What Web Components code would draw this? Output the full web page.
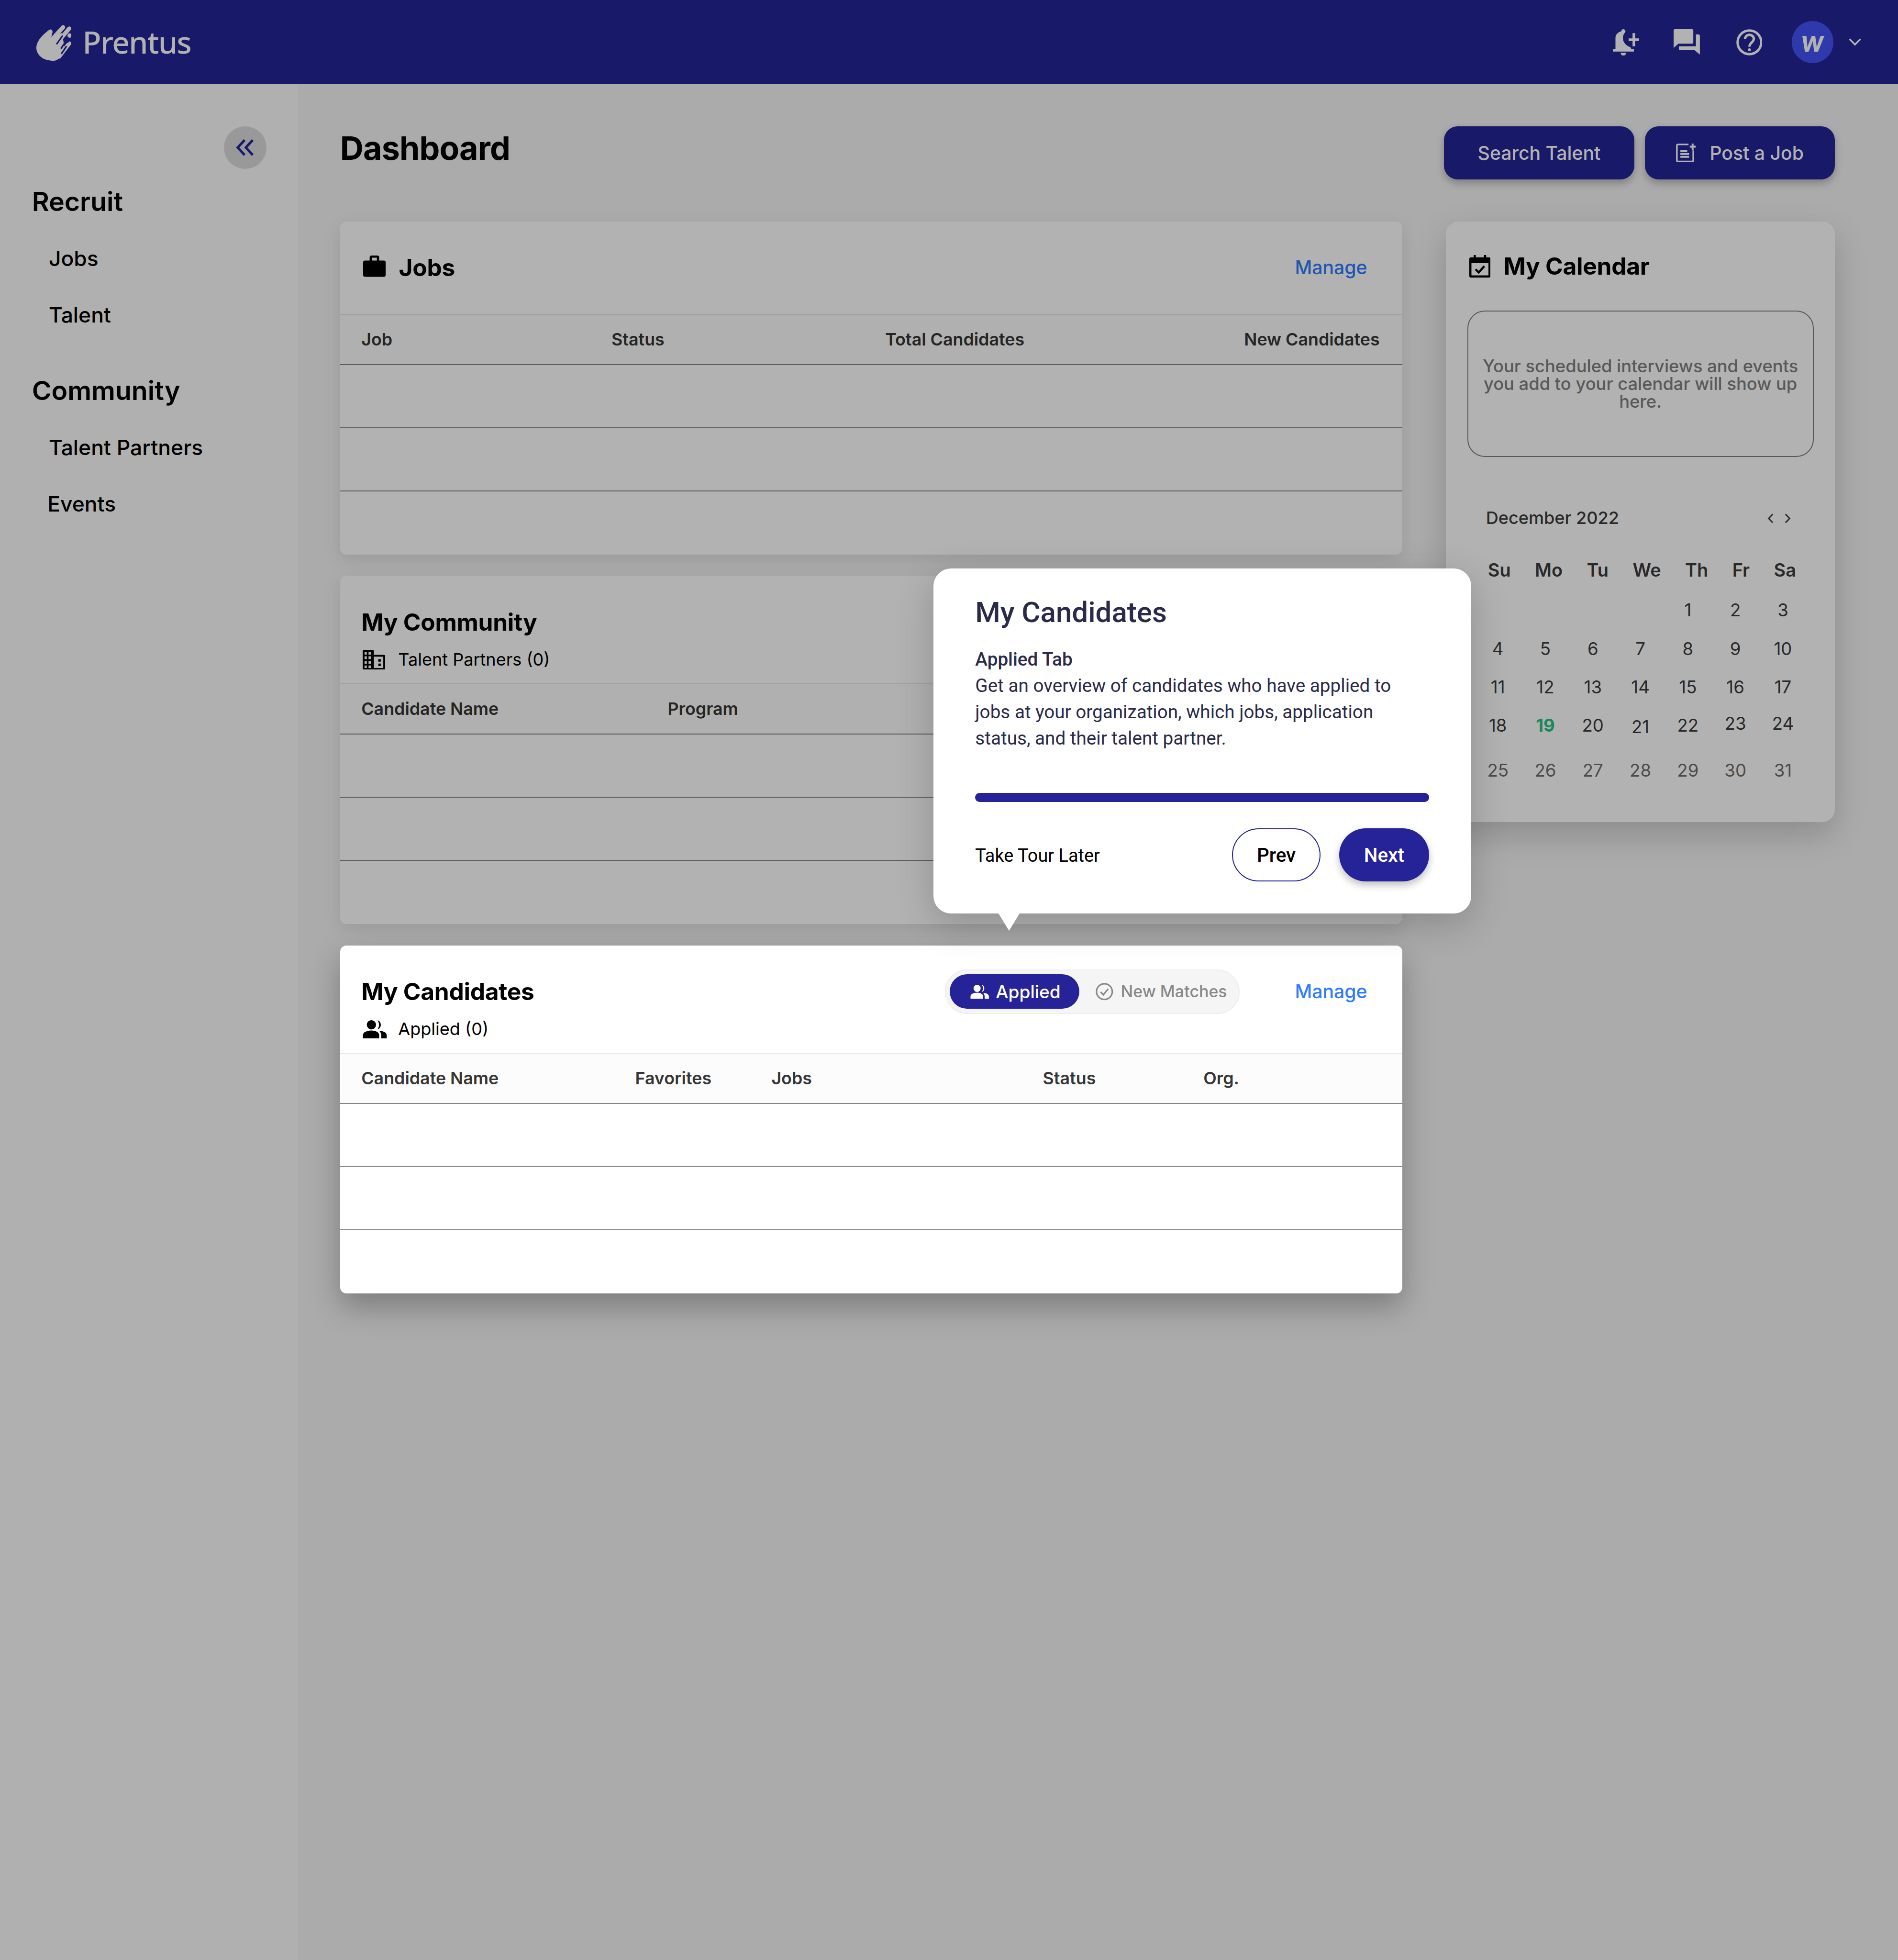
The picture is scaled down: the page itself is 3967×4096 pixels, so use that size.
<!DOCTYPE html>
<html lang="en">
<head>
<meta charset="utf-8">
<title>Prentus Dashboard</title>
<style>
  html { background: #f5f5f5; }
  /* laid out at 1518 wide, scaled up to the window */
  body { margin: 0; zoom: 2.6133; width: 1518px; height: 1568px; overflow: hidden; position: relative;
         font-family: Inter, "Liberation Sans", sans-serif; color: #000; }
</style>
</head>
<body>
<dash-layout>
  <top-bar slot="top"></top-bar>
  <side-nav slot="side"></side-nav>
  <page-head slot="main"></page-head>
  <div slot="main" style="display:grid;grid-template-columns:849.5px 311px;column-gap:35px;align-items:start">
    <div style="display:flex;flex-direction:column;gap:17px">
      <panel-card>
        <card-title slot="title" text="Jobs" icon="bag"></card-title>
        <manage-link slot="actions"></manage-link>
        <data-table cols="200px 219px 287px 1fr" labels="Job|Status|Total Candidates|New Candidates"></data-table>
      </panel-card>
      <panel-card tall>
        <card-title slot="title" text="My Community"></card-title>
        <sub-title slot="sub" text="Talent Partners (0)" icon="building"></sub-title>
        <data-table cols="245px 1fr" labels="Candidate Name|Program"></data-table>
      </panel-card>
      <panel-card tall spot>
        <card-title slot="title" text="My Candidates"></card-title>
        <tab-pill slot="actions"></tab-pill>
        <manage-link slot="actions"></manage-link>
        <sub-title slot="sub" text="Applied (0)" icon="people"></sub-title>
        <data-table cols="219px 109px 217px 128.5px 1fr" labels="Candidate Name|Favorites|Jobs|Status|Org."></data-table>
      </panel-card>
    </div>
    <calendar-card></calendar-card>
  </div>
</dash-layout>
<tour-overlay></tour-overlay>
<tour-tip></tour-tip>

<script>
const ICONS = {
  bag: `<svg viewBox="0 0 18 17" width="18" height="17"><path fill="currentColor" fill-rule="evenodd" d="M6.6 0h4.8c.8 0 1.4.6 1.4 1.4V4h3.7c1.1 0 1.5.5 1.5 1.5v10c0 1-.5 1.5-1.5 1.5H1.5C.5 17 0 16.5 0 15.5v-10C0 4.5.5 4 1.5 4h3.7V1.4C5.2.6 5.8 0 6.6 0zM7 1.7V4h4V1.7z"/></svg>`,
  building: `<svg viewBox="0 0 18 16" width="18" height="16"><path fill="currentColor" fill-rule="evenodd" d="M1 0h7c.6 0 1 .4 1 1v3h8c.6 0 1 .4 1 1v10c0 .6-.4 1-1 1H1c-.6 0-1-.4-1-1V1c0-.6.4-1 1-1zM1.5 1.5v2.3h1.8V1.5zm3.2 0v2.3h1.8V1.5zM1.5 5.2v2.3h1.8V5.2zm3.2 0v2.3h1.8V5.2zM1.5 8.9v2.3h1.8V8.9zm3.2 0v2.3h1.8V8.9zM1.5 12.5v2h1.8v-2zm3.2 0v2h1.8v-2zM8 5.5v9h8.5v-9zM12.5 7.5h2v2h-2zm0 3.5h2v2h-2z"/><path fill="currentColor" d="M7.5 5H9v10H7.5z"/></svg>`,
  people: `<svg viewBox="0 0 20 14.5" width="20" height="14.5"><path fill="currentColor" d="M7 0a3.7 3.7 0 1 1 0 7.4A3.7 3.7 0 0 1 7 0zM7 8.2c3.2 0 6.2 1.3 6.2 3.7v2.6H.2v-2.6C.2 9.5 3.8 8.2 7 8.2zM11.8.1c1.7.3 2.7 1.8 2.7 3.6s-1 3.3-2.7 3.6c.8-.9 1.3-2.2 1.3-3.6S12.6 1 11.8.1zM14.8 8.6c2.4.4 4.4 1.5 4.4 3.3v2.6h-4.4v-2.6c0-1.4-.5-2.5-1.5-3.3z"/></svg>`
};

class DashLayout extends HTMLElement {
  connectedCallback() {
    this.attachShadow({ mode: "open" }).innerHTML = `
      <style>
        :host { display: grid; grid-template-columns: 238px 1fr; grid-template-rows: 67.5px 1fr; width: 1518px; height: 1568px; }
        .top { grid-column: 1 / 3; }
        .main { padding: 33.5px 50.5px 0 34px; min-width: 0; }
      </style>
      <div class="top"><slot name="top"></slot></div>
      <slot name="side"></slot>
      <div class="main"><slot name="main"></slot></div>`;
  }
}

class TopBar extends HTMLElement {
  connectedCallback() {
    this.attachShadow({ mode: "open" }).innerHTML = `
      <style>
        :host { display: flex; align-items: center; height: 67.5px; background: #252599; color: #fff; padding: 0 29.5px 0 29px; box-sizing: border-box; }
        .brand { font: 500 24.5px/1 "Noto Sans", sans-serif; margin-left: 9px; letter-spacing: -.6px; }
        .hand { display: block; margin-top: 1px; }
        .tools { margin-left: auto; display: flex; align-items: center; }
        svg { display: block; }
        .avatar { width: 33.5px; height: 33.5px; border-radius: 50%; background: #4252f6; display: flex; align-items: center; justify-content: center; margin-left: 23.5px;
                  font: italic 900 24px/1 Lato, sans-serif; padding-bottom: 3px; box-sizing: border-box; }
      </style>
      <svg class="hand" width="28" height="29" viewBox="0 0 80 82">
        <path fill="#fff" d="M28 12c4-4 9-2 9 4l-3 12 24-10 6 30-10 25c-5 8-14 10-22 8C12 79 0 66 0 52c0-14 12-28 28-40z"/>
        <g fill="none" stroke="#fff" stroke-width="9.5" stroke-linecap="round">
          <path d="M61 5 38 30M75 8 48 40M75 42 52 72"/>
        </g>
        <path fill="none" stroke="#252599" stroke-width="3.5" d="M60 24 46 44M72 31 56 54M57 66l12-18"/>
        <circle cx="76" cy="24" r="5" fill="#fff"/>
        <circle cx="70" cy="36" r="5" fill="#252599"/>
      </svg>
      <span class="brand">Prentus</span>
      <div class="tools">
        <svg width="21" height="21" viewBox="0 0 60 60" fill="#fff"><path d="M0 45h6V20C6 13 11 7 19 5c1-3 2-5 5-5s4 2 5 6c-4 4-6 9-6 14 0 10 7 18 17 21l2 4h6v6H0zM18 54h12c0 4-2 6-6 6s-6-2-6-6z"/><path d="M45 9h6v12h9v6h-9v12h-6V27h-9v-6h9z"/></svg>
        <svg style="margin-left:27.5px" width="21" height="21" viewBox="0 0 60 60" fill="#fff"><path d="M3 0h39c2 0 3 1 3 3v27c0 2-1 3-3 3H11L0 43V3c0-2 1-3 3-3z"/><path d="M51 12h6c2 0 3 1 3 3v43L48 48H15c-2 0-3-1-3-3v-6h39z"/></svg>
        <svg style="margin-left:29px" width="21" height="21" viewBox="0 0 60 60" fill="none" stroke="#fff"><circle cx="30" cy="30" r="27" stroke-width="5.5"/><path stroke-width="5.5" d="M20 23c0-6 4-10 10-10s10 4 10 9c0 8-10 9-10 18"/><circle cx="30" cy="47" r="2.5" fill="#fff" stroke-width="1.5"/></svg>
        <div class="avatar">w</div>
        <svg style="margin-left:12px" width="10" height="6" viewBox="0 0 10 6" fill="none" stroke="#fff" stroke-width="1.4"><path d="M.7.7 5 5l4.3-4.3"/></svg>
      </div>`;
  }
}

class SideNav extends HTMLElement {
  connectedCallback() {
    this.attachShadow({ mode: "open" }).innerHTML = `
      <style>
        :host { display: block; background: #fcfcfc; padding-top: 33.5px; box-sizing: border-box; }
        .toggle { width: 34px; height: 34px; border-radius: 50%; background: #dcdcdc; margin-left: 179px; display: flex; align-items: center; justify-content: center; }
        h2 { font: 600 21.2px/26px Inter, sans-serif; margin: 0; padding-left: 25.5px; }
        .first { margin-top: 13px; }
        a { display: flex; align-items: center; height: 45.3px; font: 500 17px/1 Inter, sans-serif; padding-left: 39px; color: #000; }
        .group { padding-top: 10px; }
      </style>
      <div class="toggle"><svg width="15" height="14" viewBox="0 0 15 14" fill="none" stroke="#252599" stroke-width="2"><path d="M7 1 1.5 7 7 13M13.5 1 8 7l5.5 6"/></svg></div>
      <h2 class="first">Recruit</h2>
      <div class="group"><a>Jobs</a><a>Talent</a></div>
      <h2 style="margin-top:24.5px">Community</h2>
      <div class="group"><a>Talent Partners</a><a style="padding-left:38px">Events</a></div>`;
  }
}

class PageHead extends HTMLElement {
  connectedCallback() {
    this.attachShadow({ mode: "open" }).innerHTML = `
      <style>
        :host { display: flex; height: 42.5px; margin-bottom: 33.5px; }
        h1 { font: 700 26px/35px Inter, sans-serif; letter-spacing: -.3px; margin: 0; }
        .btns { margin-left: auto; display: flex; gap: 8.5px; }
        button { width: 152px; height: 42.5px; border: 0; border-radius: 11px; background: #252599; color: #fff; font: 500 15px/1 Inter, sans-serif;
                 display: flex; align-items: center; justify-content: center; gap: 11px; box-shadow: 0 3px 6px rgba(0,0,0,.25); padding: 0; }
        svg { display: block; }
      </style>
      <h1>Dashboard</h1>
      <div class="btns">
        <button>Search Talent</button>
        <button><svg width="16" height="15" viewBox="0 0 16 15" fill="none" stroke="#fff" stroke-width="1.3"><path d="M10 .7H1.5C1 .7.7 1 .7 1.5v12c0 .5.3.8.8.8h11.5c.5 0 .8-.3.8-.8V5.5"/><path d="M3.5 6H9M3.5 8.3h7M3.5 10.600h7" stroke-width="1.5"/><path d="M13.3 0v5M11 2.5h4.8" stroke-width="1.5"/></svg>Post a Job</button>
      </div>`;
  }
}

class PanelCard extends HTMLElement {
  connectedCallback() {
    this.attachShadow({ mode: "open" }).innerHTML = `
      <style>
        :host { display: block; background: #fff; border-radius: 5px; box-shadow: 0 4px 14px rgba(0,0,0,.1); }
        :host([spot]) { position: relative; z-index: 5; box-shadow: 0 10px 24px rgba(0,0,0,.28); }
        .head { padding: 25px 28px 0 17px; box-sizing: border-box; height: 74px; }
        :host([tall]) .head { height: 86px; }
        .top { display: flex; align-items: center; height: 24px; }
        .actions { margin-left: auto; display: flex; align-items: center; gap: 44px; }
        .sub { margin-top: 9px; }
      </style>
      <div class="head">
        <div class="top"><slot name="title"></slot><div class="actions"><slot name="actions"></slot></div></div>
        <div class="sub"><slot name="sub"></slot></div>
      </div>
      <slot></slot>`;
  }
}

class CardTitle extends HTMLElement {
  connectedCallback() {
    const icon = ICONS[this.getAttribute("icon")];
    this.attachShadow({ mode: "open" }).innerHTML = `
      <style>
        :host { display: flex; align-items: center; gap: 10.5px; font: 700 19px/24px Inter, sans-serif; letter-spacing: -.1px; }
        svg { display: block; margin: -2px 0 0 1.5px; }
      </style>
      ${icon || ""}<span>${this.getAttribute("text")}</span>`;
  }
}

class SubTitle extends HTMLElement {
  connectedCallback() {
    this.attachShadow({ mode: "open" }).innerHTML = `
      <style>
        :host { display: flex; align-items: center; height: 18px; font: 400 13.8px/18px Inter, sans-serif; }
        .i { width: 29.5px; display: flex; }
        svg { display: block; margin-left: 1px; }
      </style>
      <div class="i">${ICONS[this.getAttribute("icon")]}</div><span>${this.getAttribute("text")}</span>`;
  }
}

class ManageLink extends HTMLElement {
  connectedCallback() {
    this.attachShadow({ mode: "open" }).innerHTML = `
      <style>:host { display: block; font: 500 15px/20px Inter, sans-serif; color: #2f7bff; }</style>Manage`;
  }
}

class TabPill extends HTMLElement {
  connectedCallback() {
    this.attachShadow({ mode: "open" }).innerHTML = `
      <style>
        :host { display: flex; align-items: center; width: 236px; height: 35.5px; box-sizing: border-box; border: 1px solid #eee; border-radius: 18px; background: #f5f5f5; padding-left: 3px; margin: -6px 0; }
        .on { width: 104px; height: 27.5px; border-radius: 14px; background: #262399; color: #fff; display: flex; align-items: center; padding-left: 16.5px; box-sizing: border-box; gap: 5px; font: 500 14.2px/1 Inter, sans-serif; }
        .off { display: flex; align-items: center; gap: 6px; margin-left: 13px; font: 500 13px/1 Inter, sans-serif; color: #888; }
        svg { display: block; }
      </style>
      <div class="on">${ICONS.people.replace('width="20" height="14.5"', 'width="15.5" height="11.2"')}<span>Applied</span></div>
      <div class="off"><svg width="14" height="14" viewBox="0 0 14 14" fill="none" stroke="#888" stroke-width="1.2"><circle cx="7" cy="7" r="6.3"/><path d="M4 7.2 6.2 9.5 10 4.8"/></svg><span>New Matches</span></div>`;
  }
}

class DataTable extends HTMLElement {
  connectedCallback() {
    const labels = this.getAttribute("labels").split("|");
    this.attachShadow({ mode: "open" }).innerHTML = `
      <style>
        :host { display: block; }
        .thead { display: grid; grid-template-columns: ${this.getAttribute("cols")}; align-items: center; height: 41px; box-sizing: border-box; padding-left: 17px;
                 background: #fcfcfc; border-top: 1px solid #e6e6e6; border-bottom: 1px solid #848484; font: 600 13.7px/1 Inter, sans-serif; color: #363636; }
        .row { height: 50.5px; box-sizing: border-box; border-bottom: 1px solid #888; }
        .row:last-child { border-bottom: 0; }
      </style>
      <div class="thead">${labels.map((l) => `<div>${l}</div>`).join("")}</div>
      <div class="row"></div><div class="row"></div><div class="row"></div>`;
  }
}

class CalendarCard extends HTMLElement {
  connectedCallback() {
    const days = ["Su", "Mo", "Tu", "We", "Th", "Fr", "Sa"];
    let cells = "<span></span>".repeat(4);
    for (let d = 1; d <= 31; d++) {
      let cls = d >= 25 ? "late" : "";
      if (d === 19) cls = "today";
      if (d === 21) cls = "low";
      if (d === 23 || d === 24) cls = "high";
      cells += `<span class="${cls}">${d}</span>`;
    }
    this.attachShadow({ mode: "open" }).innerHTML = `
      <style>
        :host { display: block; background: #fff; border-radius: 10px; padding: 24px 17px 20.5px; box-shadow: 0 10px 26px rgba(0,0,0,.18); }
        .title { display: flex; align-items: center; gap: 10.5px; font: 700 19px/24px Inter, sans-serif; letter-spacing: -.1px; }
        .title svg { display: block; margin-left: 1.5px; }
        .note { margin-top: 23.5px; height: 117px; box-sizing: border-box; border: 1px solid #808080; border-radius: 14px; display: flex; align-items: center; justify-content: center; text-align: center;
                font: 500 13.9px/14px Inter, sans-serif; color: #808080; padding: 0 8px; }
        .month { margin-top: 38px; height: 22px; display: flex; align-items: center; padding: 0 15px; font: 500 13.8px/22px Inter, sans-serif; color: #3c3c3c; }
        .arrows { margin-left: auto; display: flex; gap: 9px; margin-right: 3px; }
        .week { margin-top: 20.5px; height: 20px; display: flex; justify-content: space-between; padding: 0 14px 0 16.5px; font: 600 14.5px/20px Inter, sans-serif; color: #3c3c3c; }
        .days { margin: 6.5px 0 0 5.5px; display: grid; grid-template-columns: repeat(7, 38px); grid-template-rows: 31px 31px 30.5px 31px 41px; align-items: center; justify-items: center;
                font: 400 14px/18px Inter, sans-serif; color: #3c3c3c; }
        .late { color: #6e6e6e; }
        .today { color: #25c47f; font-weight: 700; }
        .low { transform: translateY(1px); }
        .high { transform: translateY(-1.5px); }
      </style>
      <div class="title">
        <svg width="17" height="18" viewBox="0 0 17 18"><path fill="#000" fill-rule="evenodd" d="M3.5 0h1.7v1.8h6.6V0h1.7v1.8h2.2c.8 0 1.3.5 1.3 1.3v13.6c0 .8-.5 1.3-1.3 1.3H1.3C.5 18 0 17.500 0 16.700V3.100c0-.8.500-1.300 1.300-1.300h2.200zM1.700 6.500v9.800h13.600V6.500z"/><path fill="none" stroke="#000" stroke-width="1.7" d="M5 11.400l2.500 2.500 4.500-5"/></svg>
        <span>My Calendar</span>
      </div>
      <div class="note">Your scheduled interviews and events you add to your calendar will show up here.</div>
      <div class="month"><span>December 2022</span>
        <div class="arrows">
          <svg width="5" height="8" viewBox="0 0 5 8" fill="none" stroke="#3c3c3c" stroke-width="1.1"><path d="M4.3.6 1 4l3.3 3.4"/></svg>
          <svg width="5" height="8" viewBox="0 0 5 8" fill="none" stroke="#3c3c3c" stroke-width="1.1"><path d="M.7.6 4 4 .7 7.4"/></svg>
        </div>
      </div>
      <div class="week">${days.map((d) => `<span>${d}</span>`).join("")}</div>
      <div class="days">${cells}</div>`;
  }
}

class TourOverlay extends HTMLElement {
  connectedCallback() {
    this.attachShadow({ mode: "open" }).innerHTML = `
      <style>:host { position: absolute; inset: 0; z-index: 3; background: rgba(0,0,0,.3); }</style>`;
  }
}

class TourTip extends HTMLElement {
  connectedCallback() {
    this.attachShadow({ mode: "open" }).innerHTML = `
      <style>
        :host { position: absolute; left: 746.5px; top: 454.5px; width: 430px; height: 276px; z-index: 6; box-sizing: border-box; padding: 22px 33.5px 0 33.5px;
                background: #fff; border-radius: 14px; box-shadow: 0 8px 30px rgba(0,0,0,.2); font-family: Roboto, sans-serif; color: #2a2a4a; }
        :host::after { content: ""; position: absolute; left: 52px; top: 100%; border-style: solid; border-width: 14px 8.5px 0; border-color: #fff transparent transparent; }
        h3 { font: 500 23px/27px Roboto, sans-serif; margin: 0; }
        .body { margin-top: 13.5px; font: 400 14.8px/21px Roboto, sans-serif; max-width: 345px; }
        b { display: block; font-weight: 500; }
        .bar { margin-top: 33px; height: 7.5px; border-radius: 4px; background: #262399; }
        .foot { margin-top: 21px; display: flex; align-items: center; font: 400 14.5px/1 Roboto, sans-serif; color: #000; }
        .later { margin-right: auto; padding-top: 1.5px; }
        .pill { height: 42.5px; border-radius: 22px; box-sizing: border-box; display: flex; align-items: center; justify-content: center; font: 500 15.5px/1 Roboto, sans-serif; }
        .prev { width: 70.5px; border: 1px solid #262399; color: #000; }
        .next { width: 72px; margin-left: 15px; background: #262399; color: #fff; box-shadow: 0 3px 6px rgba(0,0,0,.25); }
      </style>
      <h3>My Candidates</h3>
      <div class="body"><b>Applied Tab</b>Get an overview of candidates who have applied to jobs at your organization, which jobs, application status, and their talent partner.</div>
      <div class="bar"></div>
      <div class="foot"><span class="later">Take Tour Later</span><div class="pill prev">Prev</div><div class="pill next">Next</div></div>`;
  }
}

customElements.define("dash-layout", DashLayout);
customElements.define("top-bar", TopBar);
customElements.define("side-nav", SideNav);
customElements.define("page-head", PageHead);
customElements.define("panel-card", PanelCard);
customElements.define("card-title", CardTitle);
customElements.define("sub-title", SubTitle);
customElements.define("manage-link", ManageLink);
customElements.define("tab-pill", TabPill);
customElements.define("data-table", DataTable);
customElements.define("calendar-card", CalendarCard);
customElements.define("tour-overlay", TourOverlay);
customElements.define("tour-tip", TourTip);
</script>
</body>
</html>
